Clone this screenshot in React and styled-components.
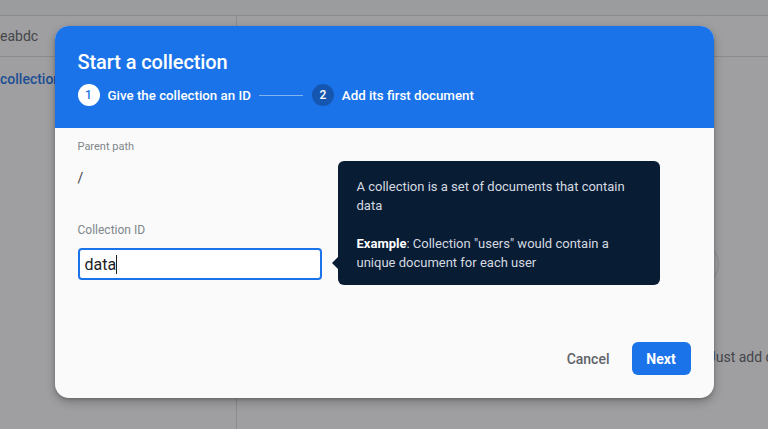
import styled, { createGlobalStyle } from 'styled-components'

const Global = createGlobalStyle`
  html, body {
    margin: 0;
    padding: 0;
    font-family: Roboto, 'Liberation Sans', sans-serif;
    overflow: hidden;
  }
  * { box-sizing: border-box; }
`

const Page = styled.div`
  width: 768px;
  height: 429px;
  background: #fff;
  display: flex;
  flex-direction: column;
  position: relative;
`

const TopStrip = styled.div`
  height: 16px;
  background: #f8f9fa;
  border-bottom: 1px solid #dadce0;
`

const Columns = styled.div`
  flex: 1;
  display: grid;
  grid-template-columns: 237px 1fr;
`

const Column = styled.div`
  display: flex;
  flex-direction: column;
  border-right: ${p => (p.$divider ? '1px solid #dadce0' : 'none')};
`

const ColHead = styled.div`
  height: 41px;
  display: flex;
  align-items: center;
  border-bottom: 1px solid #dadce0;
  font-size: 14px;
  color: #5f6368;
`

const SideLink = styled.div`
  margin-top: 14px;
  font-size: 14px;
  font-weight: 500;
  color: #1a73e8;
`

const EmptyState = styled.div`
  display: flex;
  flex-direction: column;
  padding-left: 440px;
  padding-top: 186px;
`

const GhostCircle = styled.div`
  width: 42px;
  height: 42px;
  border-radius: 50%;
  border: 1px solid #dadce0;
`

const EmptyText = styled.div`
  margin-top: 64px;
  margin-left: 31px;
  font-size: 14px;
  color: #5f6368;
  white-space: nowrap;
`

const Scrim = styled.div`
  position: absolute;
  inset: 0;
  background: rgba(32, 33, 36, 0.43);
  display: flex;
  align-items: flex-start;
  justify-content: center;
  padding-top: 26px;
`

const Dialog = styled.div`
  width: 659px;
  height: 372px;
  border-radius: 14px;
  background: #fafafa;
  box-shadow: 0 4px 10px rgba(0, 0, 0, 0.25), 0 1px 3px rgba(0, 0, 0, 0.2);
  display: flex;
  flex-direction: column;
`

const Header = styled.div`
  height: 102px;
  background: #1a73e8;
  border-radius: 14px 14px 0 0;
  padding: 24px 23px 0;
  color: #fff;
`

const Title = styled.div`
  font-size: 20px;
  line-height: 24px;
  font-weight: 500;
  letter-spacing: -0.1px;
`

const Steps = styled.div`
  margin-top: 10px;
  display: flex;
  align-items: center;
  height: 22px;
`

const StepDot = styled.div`
  width: 22px;
  height: 22px;
  border-radius: 50%;
  display: flex;
  align-items: center;
  justify-content: center;
  font-size: 12px;
  font-weight: 500;
  background: ${p => (p.$active ? '#fff' : '#1557b0')};
  color: ${p => (p.$active ? '#1a73e8' : '#fff')};
`

const StepLabel = styled.div`
  margin-left: 8px;
  font-size: 13.3px;
  font-weight: 500;
  white-space: nowrap;
`

const StepLine = styled.div`
  width: 44px;
  height: 1px;
  background: rgba(255, 255, 255, 0.45);
  margin: 0 9px 0 8px;
`

const Body = styled.div`
  flex: 1;
  position: relative;
  padding: 11px 23px 23px;
  display: flex;
  flex-direction: column;
`

const SmallLabel = styled.div`
  font-size: ${p => p.$size || 11}px;
  line-height: 16px;
  color: #80868b;
  margin-top: ${p => p.$top || 0}px;
`

const PathValue = styled.div`
  margin-top: 13px;
  font-size: 14px;
  line-height: 20px;
  color: #3c4043;
`

const Field = styled.div`
  margin-top: 10px;
  width: 244px;
  height: 32px;
  border: 2px solid #1a73e8;
  border-radius: 4px;
  background: #fff;
  display: flex;
  align-items: center;
  padding-left: 5px;
  font-size: 16px;
  color: #202124;
`

const Caret = styled.span`
  display: inline-block;
  width: 1px;
  height: 19px;
  background: #202124;
`

const Actions = styled.div`
  margin-top: auto;
  display: flex;
  justify-content: flex-end;
  align-items: center;
  gap: 11px;
`

const TextButton = styled.button`
  border: none;
  background: none;
  font-family: inherit;
  font-size: 14px;
  font-weight: 500;
  color: #5f6368;
  padding: 8px 11px 8px 12px;
`

const PrimaryButton = styled.button`
  border: none;
  background: #1a73e8;
  color: #fff;
  font-family: inherit;
  font-size: 14px;
  font-weight: 700;
  width: 59px;
  height: 33px;
  border-radius: 6px;
`

const Tooltip = styled.div`
  position: absolute;
  left: 283px;
  top: 33px;
  width: 322px;
  padding: 16px 19px 13px;
  background: #081c34;
  border-radius: 6px;
  color: #d5dae0;
  font-size: 13px;
  line-height: 19px;

  &::before {
    content: '';
    position: absolute;
    left: -6px;
    top: 96px;
    border-style: solid;
    border-width: 6px 6px 6px 0;
    border-color: transparent #081c34 transparent transparent;
  }

  p { margin: 0; }
  p + p { margin-top: 19px; }
  b { color: #fff; font-weight: 700; }
`

export default function App() {
  return (
    <>
      <Global />
      <Page>
        <TopStrip />
        <Columns>
          <Column $divider>
            <ColHead>eabdc</ColHead>
            <SideLink>collection</SideLink>
          </Column>
          <Column>
            <ColHead />
            <EmptyState>
              <GhostCircle />
              <EmptyText>Just add data</EmptyText>
            </EmptyState>
          </Column>
        </Columns>
        <Scrim>
          <Dialog>
            <Header>
              <Title>Start a collection</Title>
              <Steps>
                <StepDot $active>1</StepDot>
                <StepLabel>Give the collection an ID</StepLabel>
                <StepLine />
                <StepDot>2</StepDot>
                <StepLabel>Add its first document</StepLabel>
              </Steps>
            </Header>
            <Body>
              <SmallLabel>Parent path</SmallLabel>
              <PathValue>/</PathValue>
              <SmallLabel $size={12} $top={34}>Collection ID</SmallLabel>
              <Field>
                data<Caret />
              </Field>
              <Actions>
                <TextButton>Cancel</TextButton>
                <PrimaryButton>Next</PrimaryButton>
              </Actions>
              <Tooltip>
                <p>A collection is a set of documents that contain data</p>
                <p><b>Example</b>: Collection "users" would contain a unique document for each user</p>
              </Tooltip>
            </Body>
          </Dialog>
        </Scrim>
      </Page>
    </>
  )
}
